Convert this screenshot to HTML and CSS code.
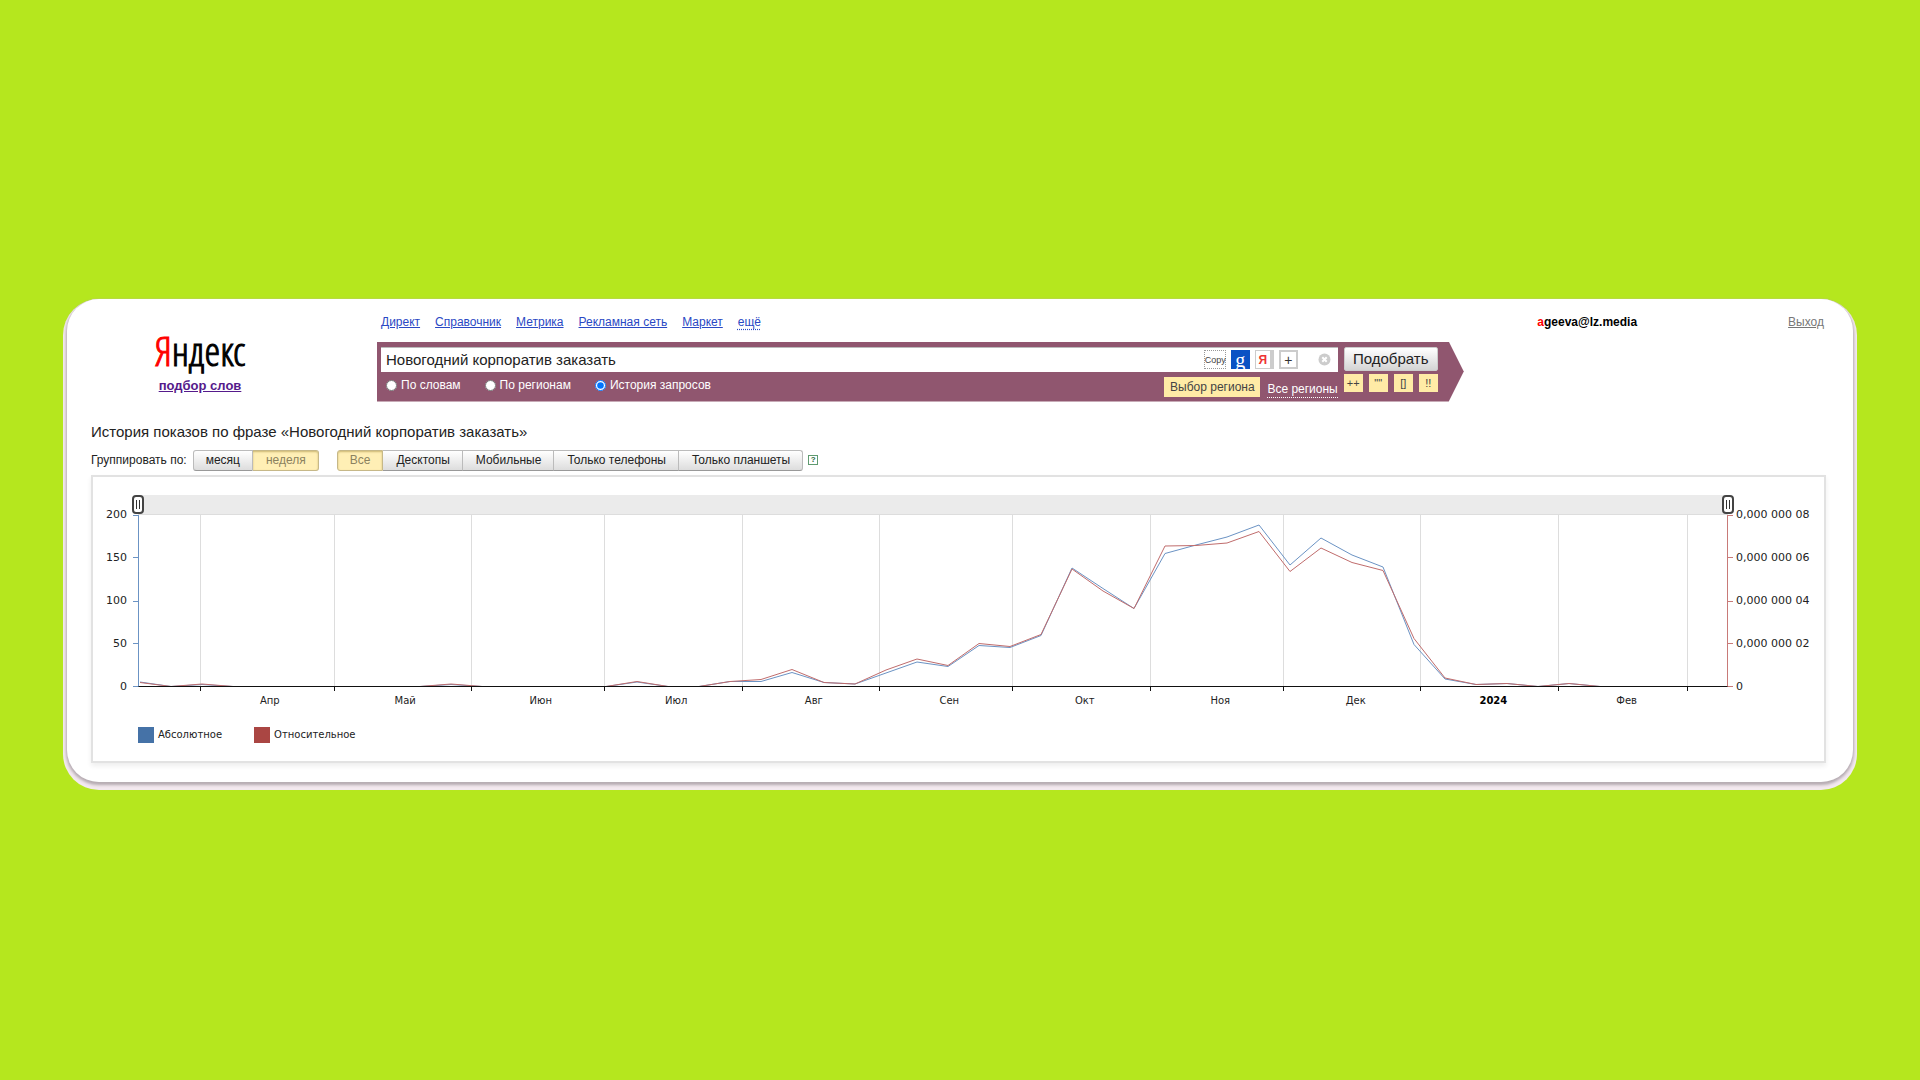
FILE: index.html
```html
<!DOCTYPE html>
<html lang="ru">
<head>
<meta charset="utf-8">
<meta name="viewport" content="width=device-width, initial-scale=1">
<title>Яндекс: подбор слов</title>
<link rel="stylesheet" href="styles.css">
</head>
<body>
<div class="card">
  <header class="header">
    <div class="brand">
      <div class="logo"><span class="logo-first">Я</span>ндекс</div>
      <a class="brand-link" href="#">подбор слов</a>
    </div>
    <div class="header-main">
      <div class="topbar">
        <nav class="services">
          <a href="#">Директ</a>
          <a href="#">Справочник</a>
          <a href="#">Метрика</a>
          <a href="#">Рекламная сеть</a>
          <a href="#">Маркет</a>
          <a class="more" href="#">ещё</a>
        </nav>
        <div class="user"><span class="user-first">a</span>geeva@lz.media</div>
        <a class="logout" href="#">Выход</a>
      </div>
      <form class="search">
        <div class="search-left">
          <div class="field">
            <input class="query" type="text" aria-label="Запрос" value="Новогодний корпоратив заказать">
            <button class="tool tool-copy" type="button">Copy</button>
            <button class="tool tool-google" type="button">g</button>
            <button class="tool tool-yandex" type="button">Я</button>
            <button class="tool tool-plus" type="button">+</button>
            <button class="tool tool-clear" type="button" aria-label="Очистить">
              <svg width="13" height="13" viewBox="0 0 13 13"><circle cx="6.500" cy="6.500" r="6" fill="#ccc"/><path d="M4.300 4.300 L8.700 8.700 M8.700 4.300 L4.300 8.700" stroke="#fff" stroke-width="2"/></svg>
            </button>
          </div>
          <div class="options">
            <label class="option"><input type="radio" name="mode">По словам</label>
            <label class="option"><input type="radio" name="mode">По регионам</label>
            <label class="option"><input type="radio" name="mode" checked>История запросов</label>
            <button class="region-button" type="button">Выбор региона</button>
            <a class="region-link" href="#">Все регионы</a>
          </div>
        </div>
        <div class="search-right">
          <button class="submit" type="submit">Подобрать</button>
          <div class="operators">
            <button type="button">++</button>
            <button type="button">""</button>
            <button type="button">[]</button>
            <button type="button">!!</button>
          </div>
        </div>
      </form>
    </div>
  </header>

  <main class="content">
    <h1 class="title">История показов по фразе «Новогодний корпоратив заказать»</h1>
    <div class="toolbar">
      <span class="toolbar-label">Группировать по:</span>
      <div class="group">
        <button type="button">месяц</button>
        <button class="active" type="button">неделя</button>
      </div>
      <div class="group">
        <button class="active" type="button">Все</button>
        <button type="button">Десктопы</button>
        <button type="button">Мобильные</button>
        <button type="button">Только телефоны</button>
        <button type="button">Только планшеты</button>
      </div>
      <button class="help" type="button">?</button>
    </div>

    <section class="chart">
      <div class="range"><span class="handle handle-start"></span><span class="handle handle-end"></span></div>
      <div class="scale scale-left">
        <span>200</span><span>150</span><span>100</span><span>50</span><span>0</span>
      </div>
      <svg class="plot" viewBox="0 1 1590 172" preserveAspectRatio="none" fill="none">
        <path class="grid-line" d="M62.5 1V172M196.5 1V172M333.5 1V172M466.5 1V172M604.5 1V172M741.5 1V172M874.5 1V172M1012.5 1V172M1145.5 1V172M1282.5 1V172M1420.5 1V172M1549.5 1V172"/>
        <polyline class="series-absolute" points="2,168 33,172.500 64,170.500 95,172.500 282,172.500 313,170.500 344,172.500 468,172.500 499,168 530,172.500 561,172.500 592,167.500 623,167.500 654,158.500 686,168.500 717,170 748,159 779,148 810,152.500 841,131.500 872,133.500 903,121.500 934,54 965,74.500 996,94.500 1027,39.500 1058,31 1089,23 1121,11 1152,51 1183,24 1214,41 1245,53 1276,130.500 1307,165 1338,170.500 1369,169.500 1400,172.500 1431,169.500 1462,172.500 1589,172.500"/>
        <polyline class="series-relative" points="2,168.500 33,172.500 64,170 95,172.500 282,172.500 313,170 344,172.500 468,172.500 499,167.500 530,172.500 561,172.500 592,167.500 623,165.500 654,155.500 686,168.500 717,170 748,156 779,145 810,151.500 841,129.500 872,132.500 903,120.500 934,55 965,77 996,94.500 1027,32 1058,31.500 1089,29 1121,17.500 1152,57.500 1183,34 1214,48.500 1245,56.500 1276,124.500 1307,164 1338,170.500 1369,169.500 1400,172.500 1431,169.500 1462,172.500 1589,172.500"/>
        <path class="axis-x" d="M0 172.500H1590M62.500 172V177M196.500 172V177M333.500 172V177M466.500 172V177M604.500 172V177M741.500 172V177M874.500 172V177M1012.500 172V177M1145.500 172V177M1282.500 172V177M1420.500 172V177M1549.500 172V177"/>
        <path class="axis-left" d="M0.500 1V172.500M-5 1.500H0M-5 43.500H0M-5 87.500H0M-5 129.500H0M-5 172.500H0"/>
        <path class="axis-right" d="M1589.500 1V172.500M1590 1.500H1595M1590 43.500H1595M1590 87.500H1595M1590 129.500H1595M1590 172.500H1595"/>
      </svg>
      <div class="scale scale-right">
        <span>0,000 000 08</span><span>0,000 000 06</span><span>0,000 000 04</span><span>0,000 000 02</span><span>0</span>
      </div>
      <div class="months">
        <span></span><span>Апр</span><span>Май</span><span>Июн</span><span>Июл</span><span>Авг</span><span>Сен</span><span>Окт</span><span>Ноя</span><span>Дек</span><span class="year">2024</span><span>Фев</span><span></span>
      </div>
      <div class="legend">
        <span class="legend-item"><i class="swatch swatch-absolute"></i>Абсолютное</span>
        <span class="legend-item"><i class="swatch swatch-relative"></i>Относительное</span>
      </div>
    </section>
  </main>
</div>
</body>
</html>
```
FILE: styles.css
```css
* {
  box-sizing: border-box;
}

body {
  margin: 0;
  min-height: 100vh;
  display: flex;
  align-items: center;
  background: #b5e71e;
  color: #222;
  font: 12px/16px "Liberation Sans", Arial, sans-serif;
}

button,
input {
  margin: 0;
  font: inherit;
}

button {
  padding: 0;
}

.card {
  flex: 1;
  min-width: 0;
  margin: 0 67px;
  padding: 15px 27px 19px 24px;
  background: #fff;
  border-radius: 32px;
  box-shadow: 0 0 1px #c9bfc6, 0 2px 3px 1px #b4aab0, 0 4px 0 4px #f3e9ef;
}

.header {
  display: flex;
  gap: 68px;
}

.brand {
  flex: none;
  width: 218px;
  padding-top: 14px;
  text-align: center;
}

.logo {
  margin-bottom: 4px;
  color: #000;
  font: 40px/46px "Open Sans Condensed Light", "Noto Sans Condensed", "Roboto Condensed", "Open Sans Condensed", "Liberation Sans Narrow", sans-serif;
  -webkit-text-stroke: 1px currentColor;
}

.logo-first {
  color: #f00;
}

.brand-link {
  color: #551a8b;
  font-weight: bold;
  font-size: 13px;
}

.header-main {
  flex: 1;
  min-width: 0;
}

.topbar {
  display: flex;
  align-items: center;
  padding: 0 2px 0 4px;
}

.services {
  display: flex;
  gap: 15px;
  margin-right: auto;
}

.services a {
  color: #2a48c4;
}

.services .more {
  text-decoration-style: dotted;
  text-underline-offset: 3px;
}

.user {
  color: #000;
  font-weight: bold;
}

.user-first {
  color: #f00;
}

.logout {
  margin-left: 151px;
  color: #777;
}

.search {
  display: flex;
  gap: 6px;
  width: 75%;
  margin-top: 12px;
  padding: 5px 26px 4px 4px;
  background: #90566f;
  clip-path: polygon(0 0, calc(100% - 15px) 0, 100% 50%, calc(100% - 15px) 100%, 0 100%);
}

.search-left {
  flex: 1;
  min-width: 0;
}

.field {
  display: flex;
  align-items: center;
  height: 25px;
  padding-right: 7px;
  background: #fff;
  border-top: 1px solid #bbb;
}

.query {
  flex: 1;
  min-width: 0;
  padding: 0 5px;
  border: 0;
  background: none;
  color: #222;
  font-size: 15px;
}

.tool {
  display: grid;
  place-items: center;
  width: 19px;
  height: 19px;
  margin-left: 5px;
  border: 1px solid #ccc;
  background: #fff;
}

.tool-copy {
  width: 22px;
  border-color: #999;
  border-style: dotted;
  color: #444;
  font-size: 9px;
}

.tool-google {
  border: 0;
  background: #0a52c4;
  color: #fff;
  font: 20px/16px "Liberation Serif", serif;
}

.tool-yandex {
  border-right-width: 4px;
  color: #e33;
  font-weight: bold;
}

.tool-plus {
  border-width: 2px;
  color: #333;
  font-size: 14px;
}

.tool-clear {
  width: 13px;
  margin-left: 20px;
  border: 0;
}

.options {
  display: flex;
  align-items: center;
  padding: 4px 0 0 5px;
  color: #fff;
}

.option {
  display: flex;
  align-items: center;
  align-self: flex-start;
  gap: 4px;
  height: 19px;
  margin-right: 24px;
}

.option input {
  width: 11px;
  height: 11px;
}

.region-button {
  width: 96px;
  height: 20px;
  margin-left: auto;
  border: 0;
  background: #ffeba6;
  color: #444;
}

.region-link {
  margin: 5px 0 0 7px;
  border-bottom: 1px dotted #fff;
  color: #fff;
  text-decoration: none;
}

.search-right {
  width: 94px;
}

.submit {
  display: block;
  width: 100%;
  height: 24px;
  border: 1px solid #ccc;
  border-radius: 2px;
  background: linear-gradient(#fff, #d4d4d4);
  color: #222;
  font-size: 15px;
}

.operators {
  display: flex;
  justify-content: space-between;
  margin-top: 3px;
}

.operators button {
  width: 19px;
  height: 18px;
  border: 0;
  background: #ffeba6;
  color: #444;
  font-size: 11px;
}

.content {
  padding-top: 20px;
}

.title {
  margin: 0 0 8px;
  font-size: 15px;
  font-weight: normal;
  line-height: 20px;
}

.toolbar {
  display: flex;
  align-items: center;
  margin-bottom: 4px;
}

.toolbar-label {
  margin-right: 6px;
}

.group {
  display: flex;
  margin-right: 18px;
}

.group button {
  height: 21px;
  padding: 0 12px 0 13px;
  border: 1px solid #bbb;
  border-left-width: 0;
  border-bottom-color: #999;
  background: linear-gradient(#fff, #ddd);
  color: #222;
}

.group button:first-child {
  padding-left: 12px;
  border-left-width: 1px;
  border-radius: 3px 0 0 3px;
}

.group button:last-child {
  border-radius: 0 3px 3px 0;
}

.group .active {
  border-color: #c6b888;
  background: #ffefb5;
  box-shadow: inset 0 1px 2px #cdb873;
  color: #8b825f;
}

.group:nth-of-type(2) {
  margin-right: 5px;
}

.help {
  width: 10px;
  height: 10px;
  border: 1px solid #5f9a70;
  background: #fff;
  color: #276b3b;
  font: bold 8px/8px "Liberation Sans", Arial, sans-serif;
}

.chart {
  display: grid;
  grid-template-columns: 45px 1fr 96px;
  padding: 18px 0 18px;
  border: 2px solid #e2e2e2;
  box-shadow: 0 3px 5px #eee;
  color: #222;
  font: 11px/14px "DejaVu Sans", Verdana, sans-serif;
}

.range {
  position: relative;
  grid-column: 2;
  height: 20px;
  background: #ebebeb;
  border-bottom: 1px solid #ddd;
}

.handle {
  position: absolute;
  z-index: 1;
  top: 0;
  width: 12px;
  height: 19px;
  border: 2px solid #444;
  border-radius: 4px;
  background: linear-gradient(90deg, transparent 2px, #333 2px 3px, transparent 3px 5px, #333 5px 6px, transparent 6px) center / 8px 9px no-repeat #fff;
}

.handle-start {
  left: -6px;
}

.handle-end {
  right: -6px;
}

.scale {
  display: flex;
  flex-direction: column;
  justify-content: space-between;
  margin: -7px 0;
}

.scale-left {
  grid-column: 1;
  padding-right: 11px;
  text-align: right;
}

.scale-right {
  padding-left: 8px;
}

.plot {
  display: block;
  width: 100%;
  height: 172px;
  overflow: visible;
}

.plot * {
  vector-effect: non-scaling-stroke;
}

.grid-line {
  stroke: #ddd;
}

.series-absolute {
  stroke: #6b93c4;
}

.series-relative {
  stroke: #c06c6c;
}

.axis-x {
  stroke: #111;
}

.axis-left {
  stroke: #6b93c4;
}

.axis-right {
  stroke: #c87a78;
}

/* One column per month, as wide as the number of days it covers. */
.months {
  grid-column: 2;
  display: grid;
  grid-template-columns: 14fr 30fr 31fr 30fr 31fr 31fr 30fr 31fr 30fr 31fr 31fr 29fr 9fr;
  padding-top: 7px;
  font-size: 10px;
  text-align: center;
}

.months span {
  min-width: 0;
  padding-left: 6px;
}

.months .year {
  color: #000;
  font-weight: bold;
}

.legend {
  grid-column: 2 / -1;
  display: flex;
  gap: 32px;
  margin-top: 19px;
  font-size: 10px;
}

.legend-item {
  display: flex;
  align-items: center;
  gap: 4px;
}

.swatch {
  width: 16px;
  height: 16px;
  background: #4572a7;
}

.swatch-relative {
  background: #aa4643;
}
```
